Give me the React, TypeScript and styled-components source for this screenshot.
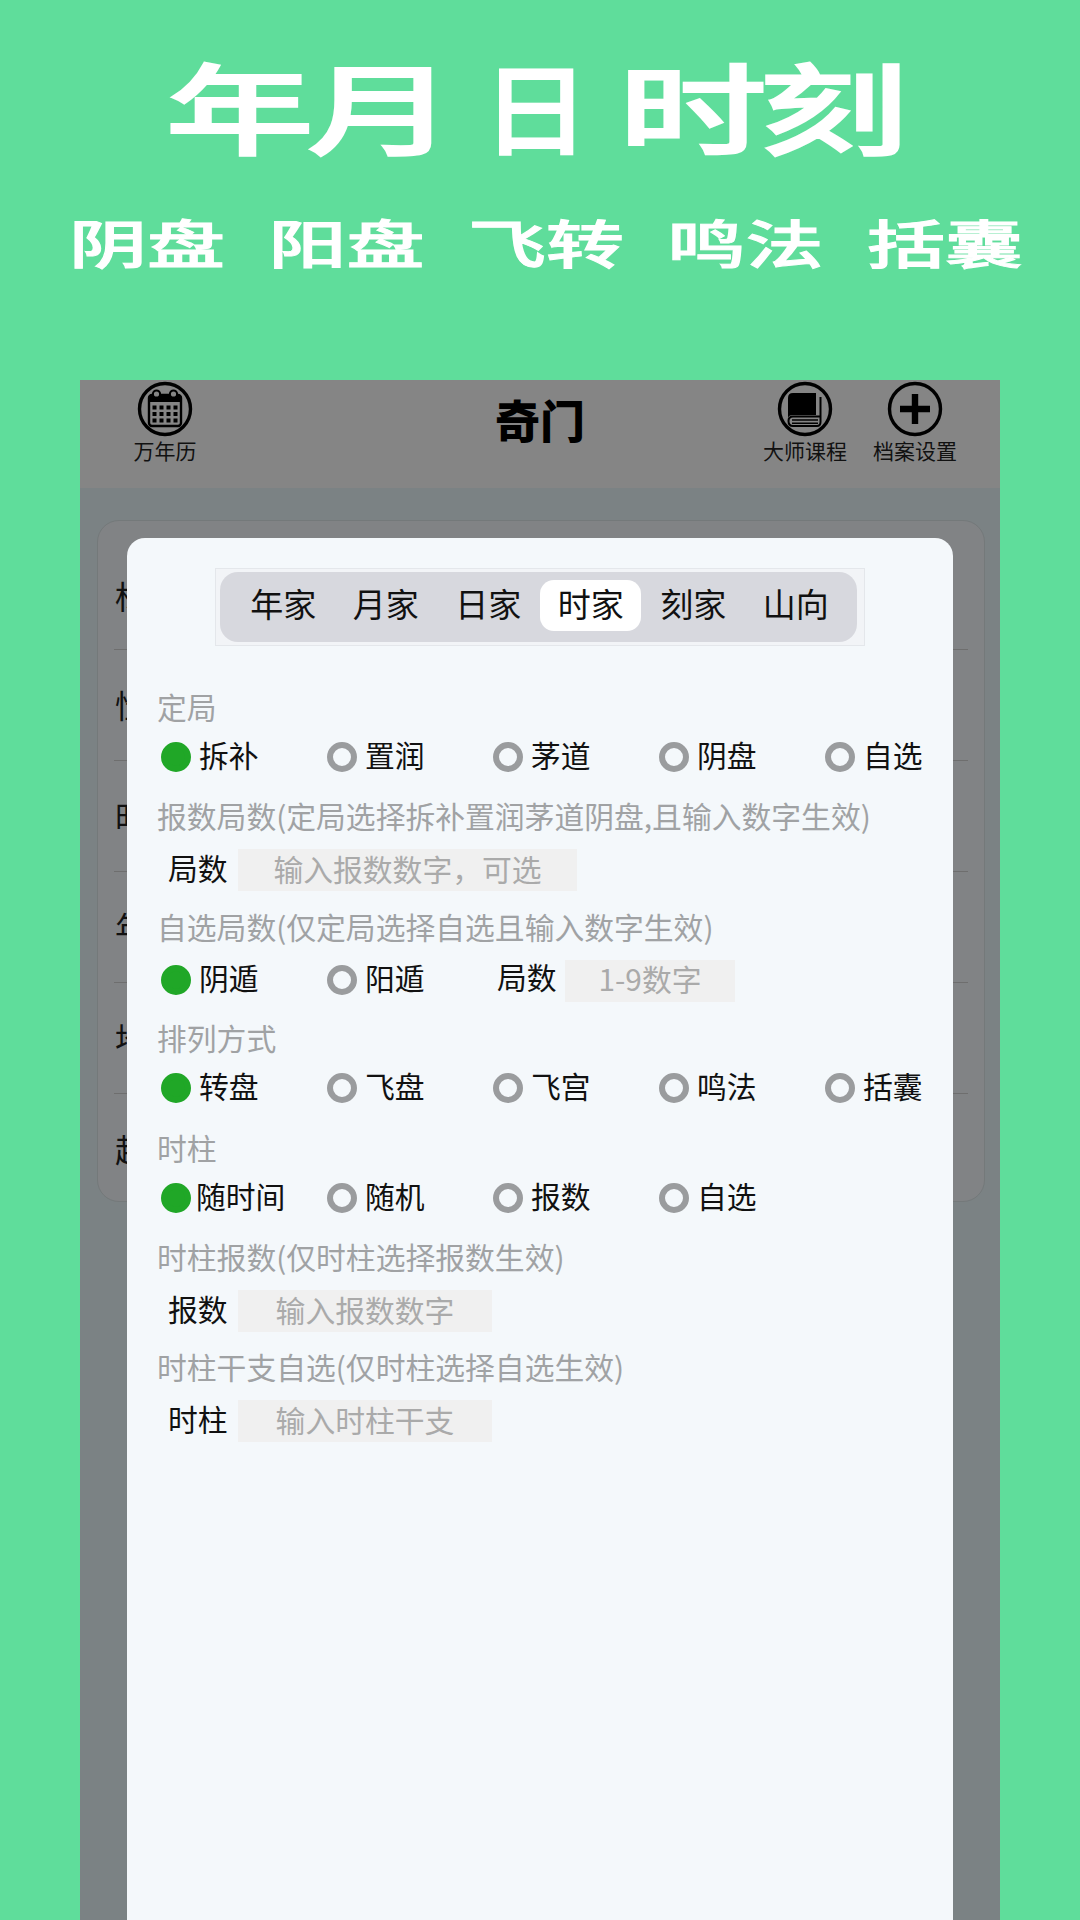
import React from "react";
import styled, { createGlobalStyle } from "styled-components";

const GlobalStyle = createGlobalStyle`
  html, body {
    margin: 0;
    padding: 0;
    background: #5fdd9b;
    font-family: "Noto Sans CJK SC", "Noto Sans", sans-serif;
  }
`;

const tabs = ["年家", "月家", "日家", "时家", "刻家", "山向"];
const backRows = ["标", "性", "时", "年", "地", "起"];

const CalendarIcon = () => (
  <svg width="56" height="56" viewBox="0 0 56 56">
    <circle cx="28" cy="28" r="25.5" fill="none" stroke="#000" strokeWidth="3.4" />
    <rect x="12" y="14" width="32" height="31" rx="3" fill="none" stroke="#000" strokeWidth="2.4" />
    <rect x="12" y="14" width="32" height="7" fill="#000" />
    <circle cx="19.5" cy="13" r="3.6" fill="#858585" stroke="#000" strokeWidth="2" />
    <circle cx="36.5" cy="13" r="3.6" fill="#858585" stroke="#000" strokeWidth="2" />
    {[0, 1, 2].map((r) =>
      [0, 1, 2, 3].map((c) => (
        <rect key={`${r}-${c}`} x={15.5 + c * 7} y={24.5 + r * 6.5} width="4" height="4" fill="#000" />
      ))
    )}
  </svg>
);

const BookIcon = () => (
  <svg width="56" height="56" viewBox="0 0 56 56">
    <circle cx="28" cy="28" r="25.5" fill="none" stroke="#000" strokeWidth="3.4" />
    <path d="M16 12H39V34H16Q11 34 11 38V17Q11 12 16 12Z" fill="#000" />
    <path d="M43.5 16V41Q43.5 45 40 45H16Q11.5 45 11.5 40Q11.5 35.5 16 35.5H43" fill="none" stroke="#000" strokeWidth="2" />
    <path d="M15 39H41M15 42.2H41" stroke="#000" strokeWidth="1.6" />
  </svg>
);

const PlusIcon = () => (
  <svg width="56" height="56" viewBox="0 0 56 56">
    <circle cx="28" cy="28" r="25.5" fill="none" stroke="#000" strokeWidth="3.4" />
    <path d="M28 13V43M13 28H43" stroke="#000" strokeWidth="6.4" />
  </svg>
);

const RadioGroup = ({ items }: { items: string[] }) => (
  <RadioRow>
    {items.map((item, i) => (
      <RadioItem key={item}>
        <Dot $on={i === 0} />
        <RadioText $wide={item.length > 2}>{item}</RadioText>
      </RadioItem>
    ))}
  </RadioRow>
);

export default function App() {
  return (
    <Page>
      <GlobalStyle />
      <Banner>
        <Title>
          年月<TitleMiddle>日</TitleMiddle>时刻
        </Title>
        <Subtitle>
          <span>阴盘</span>
          <span>阳盘</span>
          <span>飞转</span>
          <span>鸣法</span>
          <span>括囊</span>
        </Subtitle>
      </Banner>

      <Phone>
        <Header>
          <HeaderSide>
            <HeaderButton>
              <CalendarIcon />
              <HeaderLabel>万年历</HeaderLabel>
            </HeaderButton>
          </HeaderSide>
          <HeaderTitle>奇门</HeaderTitle>
          <HeaderSide $right>
            <HeaderButton>
              <BookIcon />
              <HeaderLabel>大师课程</HeaderLabel>
            </HeaderButton>
            <HeaderButton>
              <PlusIcon />
              <HeaderLabel>档案设置</HeaderLabel>
            </HeaderButton>
          </HeaderSide>
        </Header>

        <BackCard>
          {backRows.map((row) => (
            <BackRow key={row}>{row}</BackRow>
          ))}
        </BackCard>

        <Modal>
          <TabsFrame>
            <TabsBar>
              {tabs.map((tab) => (
                <Tab key={tab} $active={tab === "时家"}>
                  {tab}
                </Tab>
              ))}
            </TabsBar>
          </TabsFrame>

          <Section $after={20}>
            <SectionLabel>定局</SectionLabel>
            <RadioGroup items={["拆补", "置润", "茅道", "阴盘", "自选"]} />
          </Section>

          <Section $after={18}>
            <SectionLabel>报数局数(定局选择拆补置润茅道阴盘,且输入数字生效)</SectionLabel>
            <FieldRow>
              <FieldLabel>局数</FieldLabel>
              <FieldInput $width={339}>输入报数数字，可选</FieldInput>
            </FieldRow>
          </Section>

          <Section $after={22}>
            <SectionLabel>自选局数(仅定局选择自选且输入数字生效)</SectionLabel>
            <RadioRow>
              <RadioItem>
                <Dot $on />
                <RadioText>阴遁</RadioText>
              </RadioItem>
              <RadioItem>
                <Dot />
                <RadioText>阳遁</RadioText>
              </RadioItem>
              <InlineField>
                <InlineLabel>局数</InlineLabel>
                <FieldInput $width={170}>1-9数字</FieldInput>
              </InlineField>
            </RadioRow>
          </Section>

          <Section $after={21}>
            <SectionLabel>排列方式</SectionLabel>
            <RadioGroup items={["转盘", "飞盘", "飞宫", "鸣法", "括囊"]} />
          </Section>

          <Section $after={20}>
            <SectionLabel>时柱</SectionLabel>
            <RadioGroup items={["随时间", "随机", "报数", "自选"]} />
          </Section>

          <Section $after={17}>
            <SectionLabel>时柱报数(仅时柱选择报数生效)</SectionLabel>
            <FieldRow>
              <FieldLabel>报数</FieldLabel>
              <FieldInput $width={254}>输入报数数字</FieldInput>
            </FieldRow>
          </Section>

          <Section $after={0}>
            <SectionLabel>时柱干支自选(仅时柱选择自选生效)</SectionLabel>
            <FieldRow>
              <FieldLabel>时柱</FieldLabel>
              <FieldInput $width={254}>输入时柱干支</FieldInput>
            </FieldRow>
          </Section>
        </Modal>
      </Phone>
    </Page>
  );
}

const Page = styled.div`
  width: 1080px;
  height: 1920px;
  overflow: hidden;
  background: #5fdd9b;
`;

const Banner = styled.div`
  height: 380px;
  padding-top: 40px;
  box-sizing: border-box;
  display: flex;
  flex-direction: column;
  align-items: center;
  color: #fff;
`;
const Title = styled.div`
  height: 128px;
  line-height: 128px;
  font-size: 99px;
  font-weight: 500;
  letter-spacing: -5px;
  white-space: nowrap;
  -webkit-text-stroke: 2px #fff;
  transform: translateX(-7px) scaleX(1.5);
`;
const TitleMiddle = styled.span`
  display: inline-block;
  margin: 0 10px;
  transform: scaleX(0.72);
`;
const Subtitle = styled.div`
  margin-top: 44px;
  height: 60px;
  display: flex;
  gap: 29px;
  line-height: 60px;
  font-size: 52px;
  font-weight: 500;
  white-space: nowrap;
  -webkit-text-stroke: 1px #fff;
  transform: translateX(6px) scaleX(1.5);
`;

const Phone = styled.div`
  position: relative;
  margin: 0 80px;
  height: 1540px;
  background: #7b8284;
  overflow: hidden;
`;

const Header = styled.div`
  height: 108px;
  padding: 1px 35px 0;
  box-sizing: border-box;
  display: grid;
  grid-template-columns: 1fr auto 1fr;
  background: #858585;
`;
const HeaderSide = styled.div<{ $right?: boolean }>`
  display: flex;
  gap: 10px;
  justify-content: ${(props) => (props.$right ? "flex-end" : "flex-start")};
`;
const HeaderButton = styled.div`
  width: 100px;
  display: flex;
  flex-direction: column;
  align-items: center;
  svg {
    display: block;
  }
`;
const HeaderLabel = styled.div`
  font-size: 21px;
  line-height: 26px;
  color: #111;
  white-space: nowrap;
`;
const HeaderTitle = styled.div`
  padding-top: 9px;
  font-size: 45px;
  line-height: 60px;
  font-weight: 900;
  color: #000;
`;

const BackCard = styled.div`
  margin: 32px 15px 0 17px;
  padding: 18px 16px 0;
  height: 682px;
  box-sizing: border-box;
  background: #818385;
  border: 1px solid #74797a;
  border-radius: 22px;
`;
const BackRow = styled.div`
  height: 111px;
  box-sizing: border-box;
  padding: 34px 1px 0;
  font-size: 32px;
  line-height: 40px;
  color: #111;
  border-bottom: 1px solid #6e6e6e;
  &:first-child {
    height: 111px;
    padding-top: 36px;
  }
  &:last-child {
    border-bottom: none;
  }
`;

const Modal = styled.div`
  position: absolute;
  left: 47px;
  top: 158px;
  bottom: 0;
  width: 826px;
  box-sizing: border-box;
  padding: 30px 30px 0;
  background: #f4f8fb;
  border-radius: 18px 18px 0 0;
  display: flex;
  flex-direction: column;
`;

const TabsFrame = styled.div`
  align-self: center;
  margin-bottom: 43px;
  padding: 3px 7px 3px 4px;
  background: #f2f4f7;
  border: 1px solid #e4e7eb;
`;
const TabsBar = styled.div`
  width: 637px;
  height: 70px;
  box-sizing: border-box;
  padding: 0 10px 0 12px;
  display: grid;
  grid-template-columns: repeat(6, 102.5px);
  align-items: center;
  background: #d7d8de;
  border-radius: 18px;
`;
const Tab = styled.div<{ $active?: boolean }>`
  width: 101px;
  height: 51px;
  box-sizing: border-box;
  padding-bottom: 6px;
  margin: 0 auto 3px;
  display: flex;
  align-items: center;
  justify-content: center;
  font-size: 33px;
  color: #111;
  border-radius: 14px;
  background: ${(props) => (props.$active ? "#fff" : "transparent")};
`;

const Section = styled.div<{ $after: number }>`
  margin-bottom: ${(props) => props.$after}px;
`;
const SectionLabel = styled.div`
  height: 40px;
  line-height: 34px;
  font-size: 29.8px;
  color: #a0a2a4;
  white-space: nowrap;
`;

const RadioRow = styled.div`
  margin-top: 7px;
  height: 42px;
  padding-left: 4px;
  display: grid;
  grid-template-columns: repeat(5, 166px);
  align-items: center;
`;
const RadioItem = styled.div`
  display: flex;
  align-items: center;
`;
const Dot = styled.span<{ $on?: boolean }>`
  width: 30px;
  height: 30px;
  box-sizing: border-box;
  border-radius: 50%;
  border: 6px solid ${(props) => (props.$on ? "#20a727" : "#9a9c9e")};
  background: ${(props) => (props.$on ? "#20a727" : "transparent")};
`;
const RadioText = styled.span<{ $wide?: boolean }>`
  margin-left: ${(props) => (props.$wide ? "5px" : "8px")};
  padding-bottom: 6px;
  font-size: 29.8px;
  line-height: 36px;
  color: #111;
  white-space: nowrap;
`;

const FieldRow = styled.div`
  margin-top: 11px;
  height: 42px;
  display: flex;
  align-items: center;
`;
const FieldLabel = styled.div`
  width: 70px;
  margin-left: 11px;
  padding-bottom: 6px;
  font-size: 29.8px;
  line-height: 36px;
  color: #111;
`;
const FieldInput = styled.div<{ $width: number }>`
  width: ${(props) => props.$width}px;
  height: 42px;
  box-sizing: border-box;
  padding-bottom: 5px;
  display: flex;
  align-items: center;
  justify-content: center;
  font-size: 29.8px;
  color: #aaa;
  background: #f0f0f0;
  white-space: nowrap;
`;

const InlineField = styled.div`
  grid-column: 3 / 6;
  margin-top: 2px;
  display: flex;
  align-items: center;
`;
const InlineLabel = styled.div`
  width: 68px;
  margin-left: 4px;
  padding-bottom: 9px;
  font-size: 29.8px;
  line-height: 36px;
  color: #111;
`;
